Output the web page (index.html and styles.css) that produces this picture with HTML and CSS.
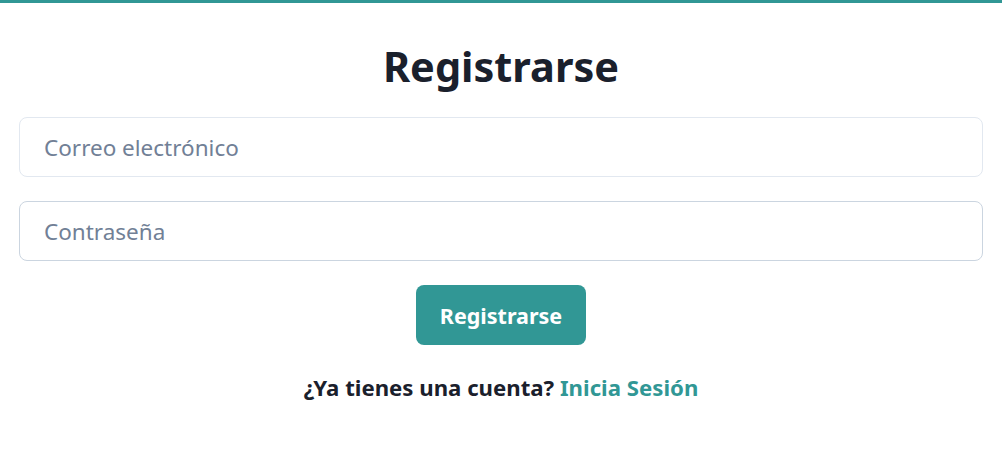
FILE: index.html
```html
<!DOCTYPE html>
<html lang="es">
<head>
<meta charset="utf-8">
<title>Registrarse</title>
<link rel="stylesheet" href="styles.css">
</head>
<body>
<main class="page">
  <h1 class="title">Registrarse</h1>
  <form class="form">
    <input class="field field-email" type="email" placeholder="Correo electrónico">
    <input class="field field-pass" type="password" placeholder="Contraseña">
    <button class="btn" type="button">Registrarse</button>
  </form>
  <p class="footer-text">¿Ya tienes una cuenta? <a class="link" href="#">Inicia Sesión</a></p>
</main>
</body>
</html>
```
FILE: styles.css
```css
html, body {
  margin: 0;
  padding: 0;
  background: #ffffff;
}
body {
  border-top: 3px solid #319795;
  font-family: "Noto Sans", "Open Sans", sans-serif;
  color: #1a202c;
}
.page {
  padding: 0 19px;
  display: flex;
  flex-direction: column;
  align-items: center;
}
.title {
  margin: 35px 0 0 0;
  font-size: 41.5px;
  line-height: 56px;
  font-weight: 700;
}
.form {
  width: 100%;
  display: flex;
  flex-direction: column;
  align-items: center;
  gap: 24px;
  margin-top: 23px;
}
.field {
  box-sizing: border-box;
  width: 100%;
  height: 60px;
  border: 1px solid #e2e8f0;
  border-radius: 8px;
  padding: 0 24px;
  font-family: inherit;
  font-size: 22.5px;
  color: #1a202c;
  outline: none;
}
.field-pass {
  border-color: #cbd5e0;
}
.field::placeholder {
  color: #718096;
}
.btn {
  height: 60px;
  padding: 0 24px;
  border: none;
  border-radius: 8px;
  background: #319795;
  color: #ffffff;
  font-family: inherit;
  font-size: 21.5px;
  font-weight: 700;
}
.footer-text {
  margin: 28px 0 0 0;
  font-size: 22.2px;
  font-weight: 700;
  line-height: 30px;
}
.link {
  color: #319795;
  text-decoration: none;
}
```
